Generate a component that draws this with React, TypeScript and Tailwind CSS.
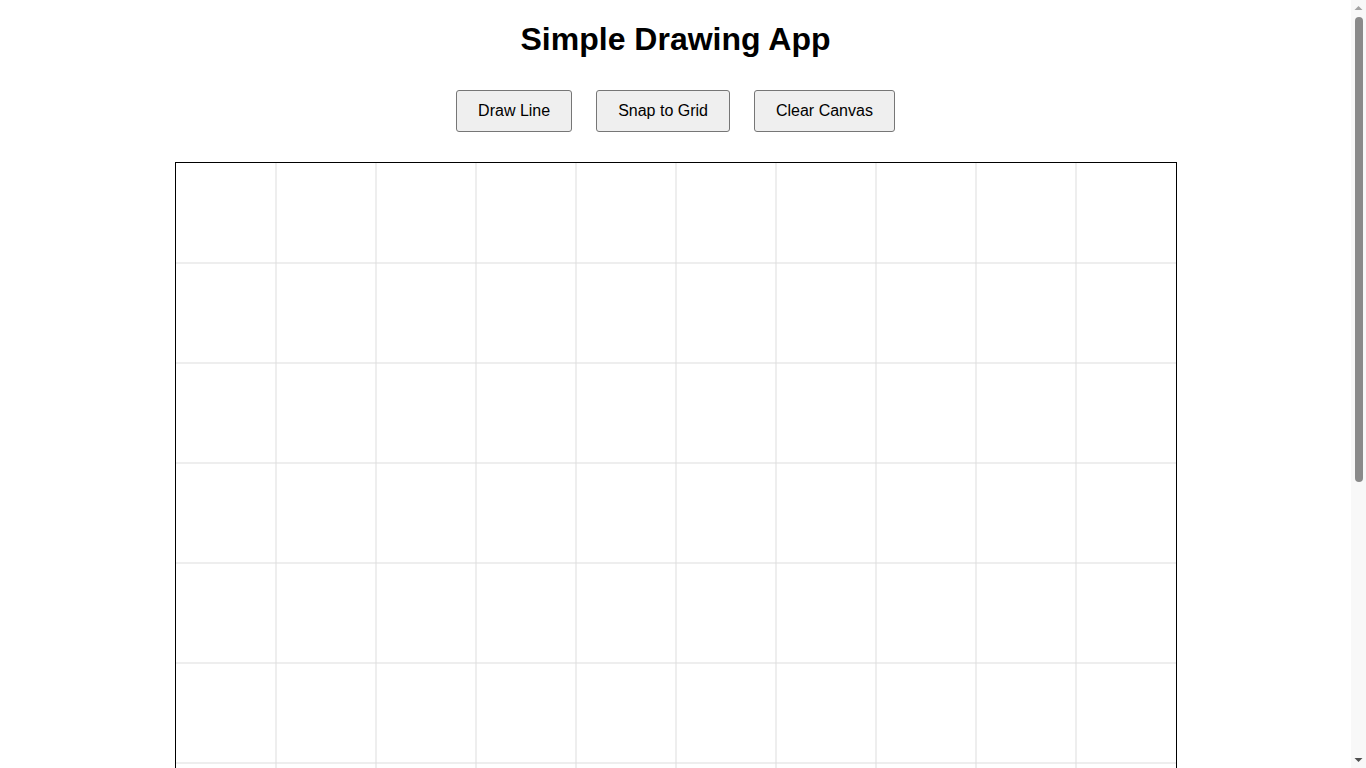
const GRID = 100
const SIZE = 1000

const lines = Array.from({ length: SIZE / GRID - 1 }, (_, i) => (i + 1) * GRID)

const GridCanvas = () => {
  return (
    <div className="border border-black bg-white">
      <svg width={SIZE} height={SIZE} className="block">
        {lines.map((p) => (
          <g key={p} stroke="#dddddd" strokeWidth={1}>
            <line x1={p} y1={0} x2={p} y2={SIZE} />
            <line x1={0} y1={p} x2={SIZE} y2={p} />
          </g>
        ))}
      </svg>
    </div>
  )
}

const ToolButton = ({ label }: { label: string }) => {
  return (
    <button className="rounded-[3px] border border-[#767676] bg-[#efefef] px-[21px] py-[11px] text-[16px] leading-[18px] text-black hover:bg-[#e5e5e5]">
      {label}
    </button>
  )
}

// page scrollbar as it shows in the screenshot
const ScrollTrack = () => {
  return (
    <div className="fixed top-0 right-0 flex h-screen w-[15px] flex-col items-center bg-[#f8f8f8]">
      <svg width="15" height="15" className="block">
        <path d="M3.5 10 L7.5 6 L11.5 10 Z" fill="#a3a3a3" />
      </svg>
      <div className="mt-[2px] h-[465px] w-[8px] rounded-full bg-[#8a8a8a]" />
      <div className="flex-1" />
      <svg width="15" height="15" className="block">
        <path d="M3.5 5 L7.5 9 L11.5 5 Z" fill="#505050" />
      </svg>
    </div>
  )
}

export default function App() {
  return (
    <div className="min-h-screen bg-white">
      <div className="flex w-[1351px] flex-col items-center pt-[21px] pb-[48px] font-['Liberation_Sans',Arial,sans-serif] text-black">
        <h1 className="text-[32px] leading-[37px] font-bold">Simple Drawing App</h1>
        <div className="mt-8 flex gap-6">
          <ToolButton label="Draw Line" />
          <ToolButton label="Snap to Grid" />
          <ToolButton label="Clear Canvas" />
        </div>
        <div className="mt-[30px]">
          <GridCanvas />
        </div>
      </div>
      <ScrollTrack />
    </div>
  )
}
